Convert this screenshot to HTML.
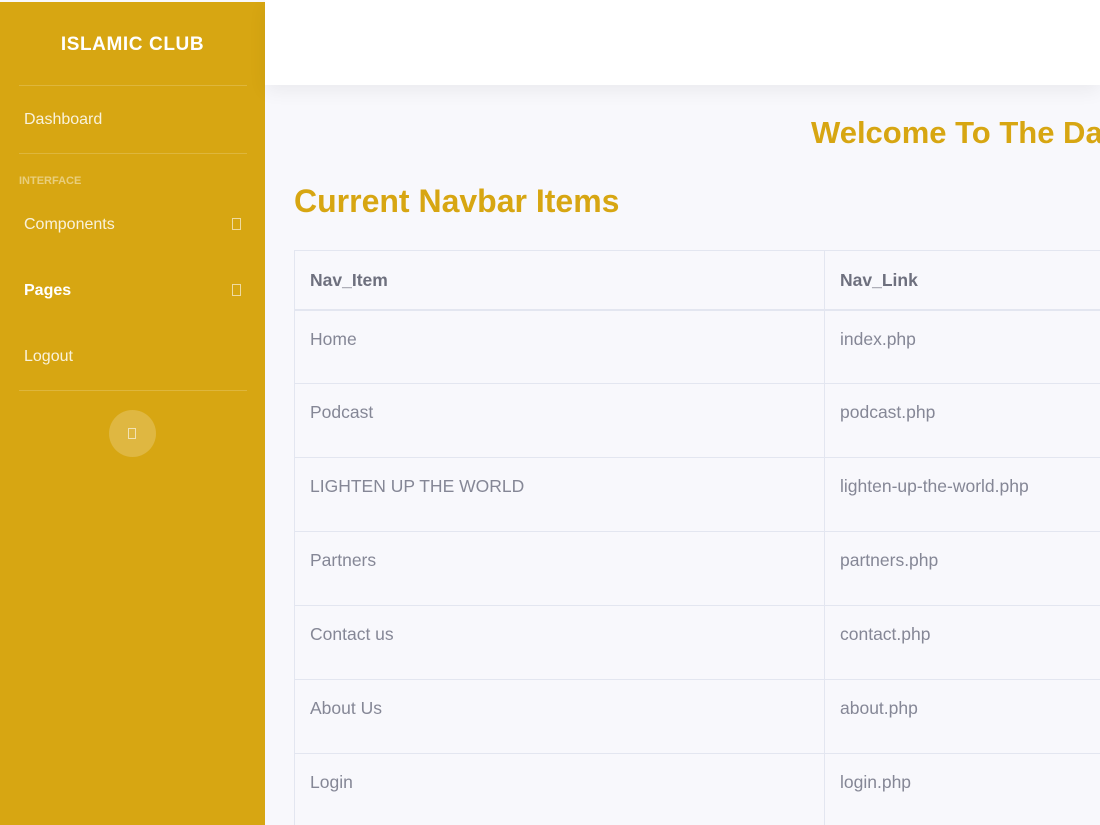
<!DOCTYPE html>
<html><head><style>
*{margin:0;padding:0;box-sizing:border-box}
html,body{width:1100px;height:825px;overflow:hidden}
body{background:#f8f8fc;font-family:"Liberation Sans",sans-serif;position:relative}
.sb{position:absolute;left:0;top:2px;width:265px;height:823px;background:#d7a612;color:#fff}
.brand{position:absolute;top:32px;left:0;width:265px;text-align:center;font-weight:bold;font-size:19px;letter-spacing:.6px}
.hr{position:absolute;left:19px;width:228px;height:1px;background:rgba(255,255,255,.18)}
.it{position:absolute;left:24px;font-size:16px;color:rgba(255,255,255,.85)}
.ic{position:absolute;left:232px;width:9px;height:12px;border:1px solid rgba(255,255,255,.6)}
.top{position:absolute;left:265px;top:0;width:835px;height:85px;background:#fff;box-shadow:0 6px 18px rgba(0,0,0,.06)}
.main{position:absolute;left:265px;top:85px;width:835px;height:740px;overflow:hidden}
h1{position:absolute;left:546px;top:30px;font-size:31px;color:#d7a612;font-weight:bold;white-space:nowrap}
h2{position:absolute;left:29px;top:98px;font-size:32px;color:#d7a612;font-weight:bold;white-space:nowrap}
table{position:absolute;left:29px;top:165px;width:830px;border-collapse:collapse;font-size:17.5px;color:#858796}
td,th{border:1px solid #e3e6f0;padding:0 15px;text-align:left;vertical-align:top;height:74px;padding-top:18px}
th{height:59px;padding-top:19px;border-bottom:2px solid #e3e6f0;color:#6e707e}
td:first-child,th:first-child{width:530px}
</style></head><body>
<div class="sb">
<div class="brand">ISLAMIC CLUB</div>
<div class="hr" style="top:83px"></div>
<div class="it" style="top:109px">Dashboard</div>
<div class="hr" style="top:151px"></div>
<div style="position:absolute;left:19px;top:173px;font-size:11px;font-weight:bold;color:rgba(255,255,255,.45)">INTERFACE</div>
<div class="it" style="top:214px">Components</div><div class="ic" style="top:216px"></div>
<div class="it" style="top:280px;font-weight:bold;color:#fff">Pages</div><div class="ic" style="top:282px"></div>
<div class="it" style="top:346px">Logout</div>
<div class="hr" style="top:388px"></div>
<div style="position:absolute;left:109px;top:408px;width:47px;height:47px;border-radius:50%;background:rgba(255,255,255,.2)"><div style="position:absolute;left:19px;top:18px;width:8px;height:11px;border:1px solid rgba(255,255,255,.6)"></div></div>
</div>
<div class="top"></div>
<div class="main">
<h1>Welcome To The Dashboard</h1>
<h2>Current Navbar Items</h2>
<table>
<tr><th>Nav_Item</th><th>Nav_Link</th></tr>
<tr><td>Home</td><td>index.php</td></tr>
<tr><td>Podcast</td><td>podcast.php</td></tr>
<tr><td>LIGHTEN UP THE WORLD</td><td>lighten-up-the-world.php</td></tr>
<tr><td>Partners</td><td>partners.php</td></tr>
<tr><td>Contact us</td><td>contact.php</td></tr>
<tr><td>About Us</td><td>about.php</td></tr>
<tr><td>Login</td><td>login.php</td></tr>
</table>
</div>
</body></html>
